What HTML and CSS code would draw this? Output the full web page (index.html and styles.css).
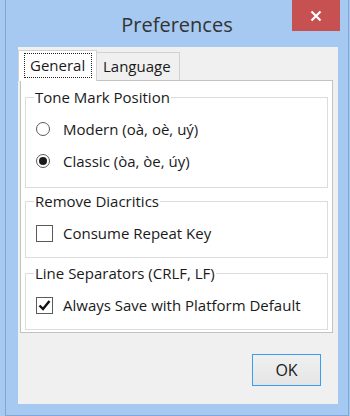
FILE: index.html
```html
<!DOCTYPE html>
<html lang="en">
<head>
  <meta charset="UTF-8" />
  <title>Preferences</title>
  <link rel="stylesheet" href="styles.css">
</head>
<body>

  <div class="window">
    <div class="titlebar">
      <div class="title">Preferences</div>
      <div class="close">
        <svg width="12" height="12" viewBox="0 0 12 12">
          <path d="M1.5 1.5 L10.5 10.5 M10.5 1.5 L1.5 10.5" stroke="#fff" stroke-width="2.2" fill="none"/>
        </svg>
      </div>
    </div>

    <div class="client">
      <div class="tabs">
        <div class="tab selected"><span class="focus">General</span></div>
        <div class="tab">Language</div>
      </div>

      <div class="panel">
        <fieldset class="group group-tone">
          <legend>Tone Mark Position</legend>
          <div class="row"><span class="radio"></span>Modern (oà, oè, uý)</div>
          <div class="row"><span class="radio on"></span>Classic (òa, òe, úy)</div>
        </fieldset>

        <fieldset class="group">
          <legend>Remove Diacritics</legend>
          <div class="row"><span class="check"></span>Consume Repeat Key</div>
        </fieldset>

        <fieldset class="group">
          <legend>Line Separators (CRLF, LF)</legend>
          <div class="row">
            <span class="check">
              <svg width="15" height="15" viewBox="0 0 15 15">
                <path d="M2.5 7.5 L6 11 L12.5 3" stroke="#111" stroke-width="2.4" fill="none"/>
              </svg>
            </span>Always Save with Platform Default
          </div>
        </fieldset>
      </div>

      <div class="buttons">
        <button class="ok">OK</button>
      </div>
    </div>
  </div>

</body>
</html>
```

FILE: styles.css
```css
body {
  margin: 0;
  padding: 0;
  background-color: #a5c9f1;
  font-family: 'Open Sans', 'Noto Sans', sans-serif;
  color: #1a1a1a;
}

.window {
  margin-left: 5px;
  width: 342px;
  height: 415px;
  background-color: #a5c9f1;
  border-left: 1px solid #7fa6d6;
  border-right: 1px solid #7fa6d6;
  border-bottom: 1px solid #7fa6d6;
}

.titlebar {
  height: 47px;
  display: grid;
  grid-template-columns: 1fr auto 1fr;
}

.title {
  grid-column: 2;
  font-size: 20px;
  line-height: 28px;
  padding-top: 11px;
  color: #333;
}

.close {
  grid-column: 3;
  justify-self: end;
  margin-right: 8px;
  width: 48px;
  height: 31px;
  background-color: #c75050;
  display: flex;
  align-items: center;
  justify-content: center;
}

.client {
  margin: 0 10px 0 12px;
  height: 357px;
  background-color: #f0f0f0;
  padding: 3px 5px 0 2px;
  box-sizing: border-box;
}

.tabs {
  display: flex;
  align-items: flex-end;
  height: 30px;
  margin-left: -2px;
}

.tab {
  box-sizing: border-box;
  height: 28px;
  padding: 0 6px;
  font-size: 15px;
  line-height: 26px;
  border: 1px solid #d2d2d2;
  border-bottom: none;
  background-color: #f0f0f0;
}

.tab.selected {
  position: relative;
  z-index: 1;
  height: 31px;
  margin-bottom: -1px;
  width: 79px;
  padding: 2px 4px 0 5px;
  background-color: #fff;
}

.focus {
  display: block;
  border: 1px dotted #222;
  height: 25px;
  line-height: 22px;
  padding-left: 5px;
  box-sizing: border-box;
}

.tab + .tab {
  margin-left: -1px;
  width: 84px;
}

.panel {
  height: 253px;
  box-sizing: border-box;
  background-color: #fff;
  border: 1px solid #c2c2c2;
  padding: 8px 4px 0 4px;
}

.group {
  margin: 5px 0 0 0;
  padding: 8px 8px 8px 9px;
  border: 1px solid #dcdcdc;
  min-width: 0;
}

.group-tone {
  margin-top: 0;
  padding-bottom: 10px;
}

.group + .group + .group {
  margin-top: 7px;
}

legend {
  font-size: 15px;
  line-height: 16px;
  padding: 0 1px;
  margin-left: -1px;
}

.row {
  display: flex;
  align-items: center;
  height: 32px;
  font-size: 15px;
}

.radio {
  box-sizing: border-box;
  width: 14px;
  height: 14px;
  border: 1px solid #5a5a5a;
  border-radius: 50%;
  background-color: #fff;
  margin: 0 13px 0 1px;
  display: flex;
  align-items: center;
  justify-content: center;
}

.radio.on::after {
  content: "";
  width: 8px;
  height: 8px;
  border-radius: 50%;
  background-color: #1a1a1a;
}

.check {
  box-sizing: border-box;
  width: 17px;
  height: 17px;
  border: 1px solid #5a5a5a;
  background-color: #fff;
  margin: 0 10px 0 1px;
  display: flex;
  align-items: center;
  justify-content: center;
}

.buttons {
  display: flex;
  justify-content: flex-end;
  padding-top: 21px;
  padding-right: 12px;
}

.ok {
  width: 69px;
  height: 32px;
  font-family: 'Open Sans', 'Noto Sans', sans-serif;
  font-size: 16px;
  color: #1a1a1a;
  border: 1px solid #3c9bf2;
  background: linear-gradient(#f0f0f0, #e5e5e5);
  padding: 0;
}
```
